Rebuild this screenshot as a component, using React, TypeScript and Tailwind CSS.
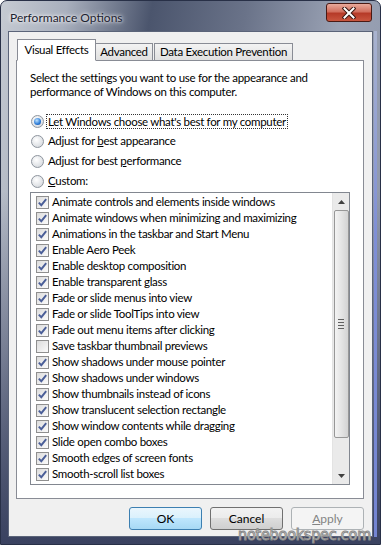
import React from 'react'

const items: [string, boolean][] = [
  ['Animate controls and elements inside windows', true],
  ['Animate windows when minimizing and maximizing', true],
  ['Animations in the taskbar and Start Menu', true],
  ['Enable Aero Peek', true],
  ['Enable desktop composition', true],
  ['Enable transparent glass', true],
  ['Fade or slide menus into view', true],
  ['Fade or slide ToolTips into view', true],
  ['Fade out menu items after clicking', true],
  ['Save taskbar thumbnail previews', false],
  ['Show shadows under mouse pointer', true],
  ['Show shadows under windows', true],
  ['Show thumbnails instead of icons', true],
  ['Show translucent selection rectangle', true],
  ['Show window contents while dragging', true],
  ['Slide open combo boxes', true],
  ['Smooth edges of screen fonts', true],
  ['Smooth-scroll list boxes', true],
]

const Radio = ({ checked }: { checked?: boolean }) => (
  <span className="w-[13px] h-[13px] rounded-full border border-[#8e959e] bg-[radial-gradient(circle_at_40%_35%,#ffffff,#dcdfe3_70%,#c9ced4)] flex items-center justify-center shrink-0">
    {checked && (
      <span className="w-[7px] h-[7px] rounded-full bg-[radial-gradient(circle_at_40%_35%,#bfe3ff,#2a7ad6_60%,#123f8a)]" />
    )}
  </span>
)

const Check = ({ checked }: { checked: boolean }) => (
  <span className="w-[13px] h-[13px] border border-[#8f8f8f] bg-[linear-gradient(135deg,#dcdcdc,#fbfbfb)] flex items-center justify-center shrink-0">
    {checked && (
      <svg width="11" height="11" viewBox="0 0 11 11">
        <path d="M1.8 5.6 L4.3 8.2 L9.2 2.2" fill="none" stroke="#4a5e98" strokeWidth="1.9" strokeLinejoin="miter" />
      </svg>
    )}
  </span>
)

const Button = ({ children, kind }: { children: React.ReactNode; kind?: 'default' | 'disabled' }) => {
  const cls =
    kind === 'default'
      ? 'border-[#3c7fb1] bg-[linear-gradient(to_bottom,#eaf6fd_0%,#d9f0fc_50%,#bee6fd_50%,#a7d9f5_100%)] text-black'
      : kind === 'disabled'
        ? 'border-[#adb2b5] bg-[#f4f4f4] text-[#838383]'
        : 'border-[#707070] bg-[linear-gradient(to_bottom,#f2f2f2_0%,#ebebeb_50%,#dddddd_50%,#cfcfcf_100%)] text-black'
  return (
    <div className={`w-[73px] h-[23px] rounded-[3px] border flex items-center justify-center leading-[14px] ${cls}`}>
      {children}
    </div>
  )
}

export default function App() {
  return (
    <div className="w-[381px] h-[545px] font-['Lato',sans-serif] text-[11.5px] tracking-[-0.3px] text-black relative rounded-t-[7px] border border-[#283047] flex flex-col overflow-hidden bg-[linear-gradient(to_bottom,transparent_35%,#3a4260_100%),linear-gradient(100deg,#c6cbd3_0%,#a8afbd_14%,#4b556d_32%,#6a7389_52%,#9aa2b4_72%,#8a93a8_100%)]">
      {/* title bar */}
      <div className="h-[30px] flex items-start shrink-0">
        <div className="pl-[9px] pt-[8px] text-[12px] tracking-normal text-[#1d2230] [text-shadow:0_0_6px_#ffffff,0_0_3px_#ffffff]">
          Performance Options
        </div>
        <div className="ml-auto mr-[8px] mt-[2px] w-[46px] h-[19px] rounded-[3px] border border-[#4a1a14] bg-[linear-gradient(to_bottom,#e9a99b_0%,#d2705f_45%,#b63a28_55%,#c9563f_100%)] flex items-center justify-center">
          <svg width="14" height="12" viewBox="0 0 14 12">
            <path d="M2.5 1.5 L11.5 10.5 M11.5 1.5 L2.5 10.5" stroke="#3a1610" strokeWidth="4" strokeLinecap="square" />
            <path d="M2.5 1.5 L11.5 10.5 M11.5 1.5 L2.5 10.5" stroke="#ffffff" strokeWidth="2" strokeLinecap="square" />
          </svg>
        </div>
      </div>

      {/* client */}
      <div className="ml-[7px] mr-[3px] mb-[7px] flex-1 flex">
        <div className="flex-1 border border-[#5b6479] bg-[#f0f0f0] flex flex-col pl-[7px] pr-[8px] pt-[7px]">
          {/* tabs */}
          <div className="flex items-end ml-[1px] -mb-px relative z-10 whitespace-nowrap">
            <div className="w-[79px] h-[22px] bg-white border border-[#898c95] border-b-white flex items-center justify-center">Visual Effects</div>
            <div className="w-[57px] h-[18px] border border-l-0 border-[#898c95] bg-[linear-gradient(to_bottom,#f3f3f3,#e0e0e0)] flex items-center justify-center">Advanced</div>
            <div className="w-[139px] h-[18px] ml-px border border-[#898c95] bg-[linear-gradient(to_bottom,#f3f3f3,#e0e0e0)] flex items-center justify-center">Data Execution Prevention</div>
          </div>

          {/* panel */}
          <div className="h-[439px] border border-[#898c95] bg-white pl-[13px] pt-[10px] flex flex-col">
            <div className="leading-[14px]">
              Select the settings you want to use for the appearance and<br />
              performance of Windows on this computer.
            </div>

            <div className="mt-[15px] flex flex-col gap-[6px] pl-[1px]">
              <div className="h-[14px] flex items-center gap-[3px]">
                <Radio checked />
                <span className="outline-1 outline-dotted outline-[#333] px-px leading-[13px]">Let Windows choose what's best for my computer</span>
              </div>
              <div className="h-[14px] flex items-center gap-[4px]">
                <Radio />
                <span>Adjust for <u>b</u>est appearance</span>
              </div>
              <div className="h-[14px] flex items-center gap-[4px]">
                <Radio />
                <span>Adjust for best <u>p</u>erformance</span>
              </div>
              <div className="h-[14px] flex items-center gap-[4px]">
                <Radio />
                <span><u>C</u>ustom:</span>
              </div>
            </div>

            {/* list */}
            <div className="mt-[4px] w-[320px] h-[293px] border border-[#828790] bg-white flex">
              <div className="flex-1 pt-[1px] pl-[5px]">
                {items.map(([label, on]) => (
                  <div key={label} className="h-[16px] flex items-center gap-[3px] whitespace-nowrap">
                    <Check checked={on} />
                    <span className="leading-[16px]">{label}</span>
                  </div>
                ))}
              </div>
              <div className="w-[17px] bg-[#eaeaea] flex flex-col items-center border-l border-[#e3e3e3]">
                <div className="h-[17px] w-full flex items-center justify-center">
                  <svg width="7" height="4" viewBox="0 0 7 4"><path d="M0 4 L3.5 0 L7 4 Z" fill="#404040" /></svg>
                </div>
                <div className="h-[228px] w-[15px] rounded-[2px] border border-[#979797] bg-[linear-gradient(to_right,#f3f3f3,#e4e4e4_50%,#d3d3d3)] flex items-center justify-center">
                  <div className="flex flex-col gap-[2px]">
                    <div className="w-[6px] h-px bg-[#606060]" />
                    <div className="w-[6px] h-px bg-[#606060]" />
                    <div className="w-[6px] h-px bg-[#606060]" />
                    <div className="w-[6px] h-px bg-[#606060]" />
                  </div>
                </div>
                <div className="flex-1" />
                <div className="h-[17px] w-full flex items-center justify-center">
                  <svg width="7" height="4" viewBox="0 0 7 4"><path d="M0 0 L3.5 4 L7 0 Z" fill="#404040" /></svg>
                </div>
              </div>
            </div>
          </div>

          {/* buttons */}
          <div className="mt-[8px] flex justify-end gap-[8px] text-[12px] tracking-normal">
            <Button kind="default">OK</Button>
            <Button>Cancel</Button>
            <Button kind="disabled"><span><u>A</u>pply</span></Button>
          </div>
        </div>
        {/* blue strip of the right frame */}
        <div className="w-[3px] ml-px bg-[linear-gradient(to_bottom,#a9b3cf,#7f8fd6_40%,#7384d2)]" />
      </div>

      <div className="absolute right-[9px] bottom-0 h-[19px] leading-[19px] text-[16px] tracking-[-0.2px] font-['DejaVu_Sans_Condensed','DejaVu_Sans',sans-serif] text-white [-webkit-text-stroke:1px_#8a8a8a]">
        notebookspec.com
      </div>
    </div>
  )
}
